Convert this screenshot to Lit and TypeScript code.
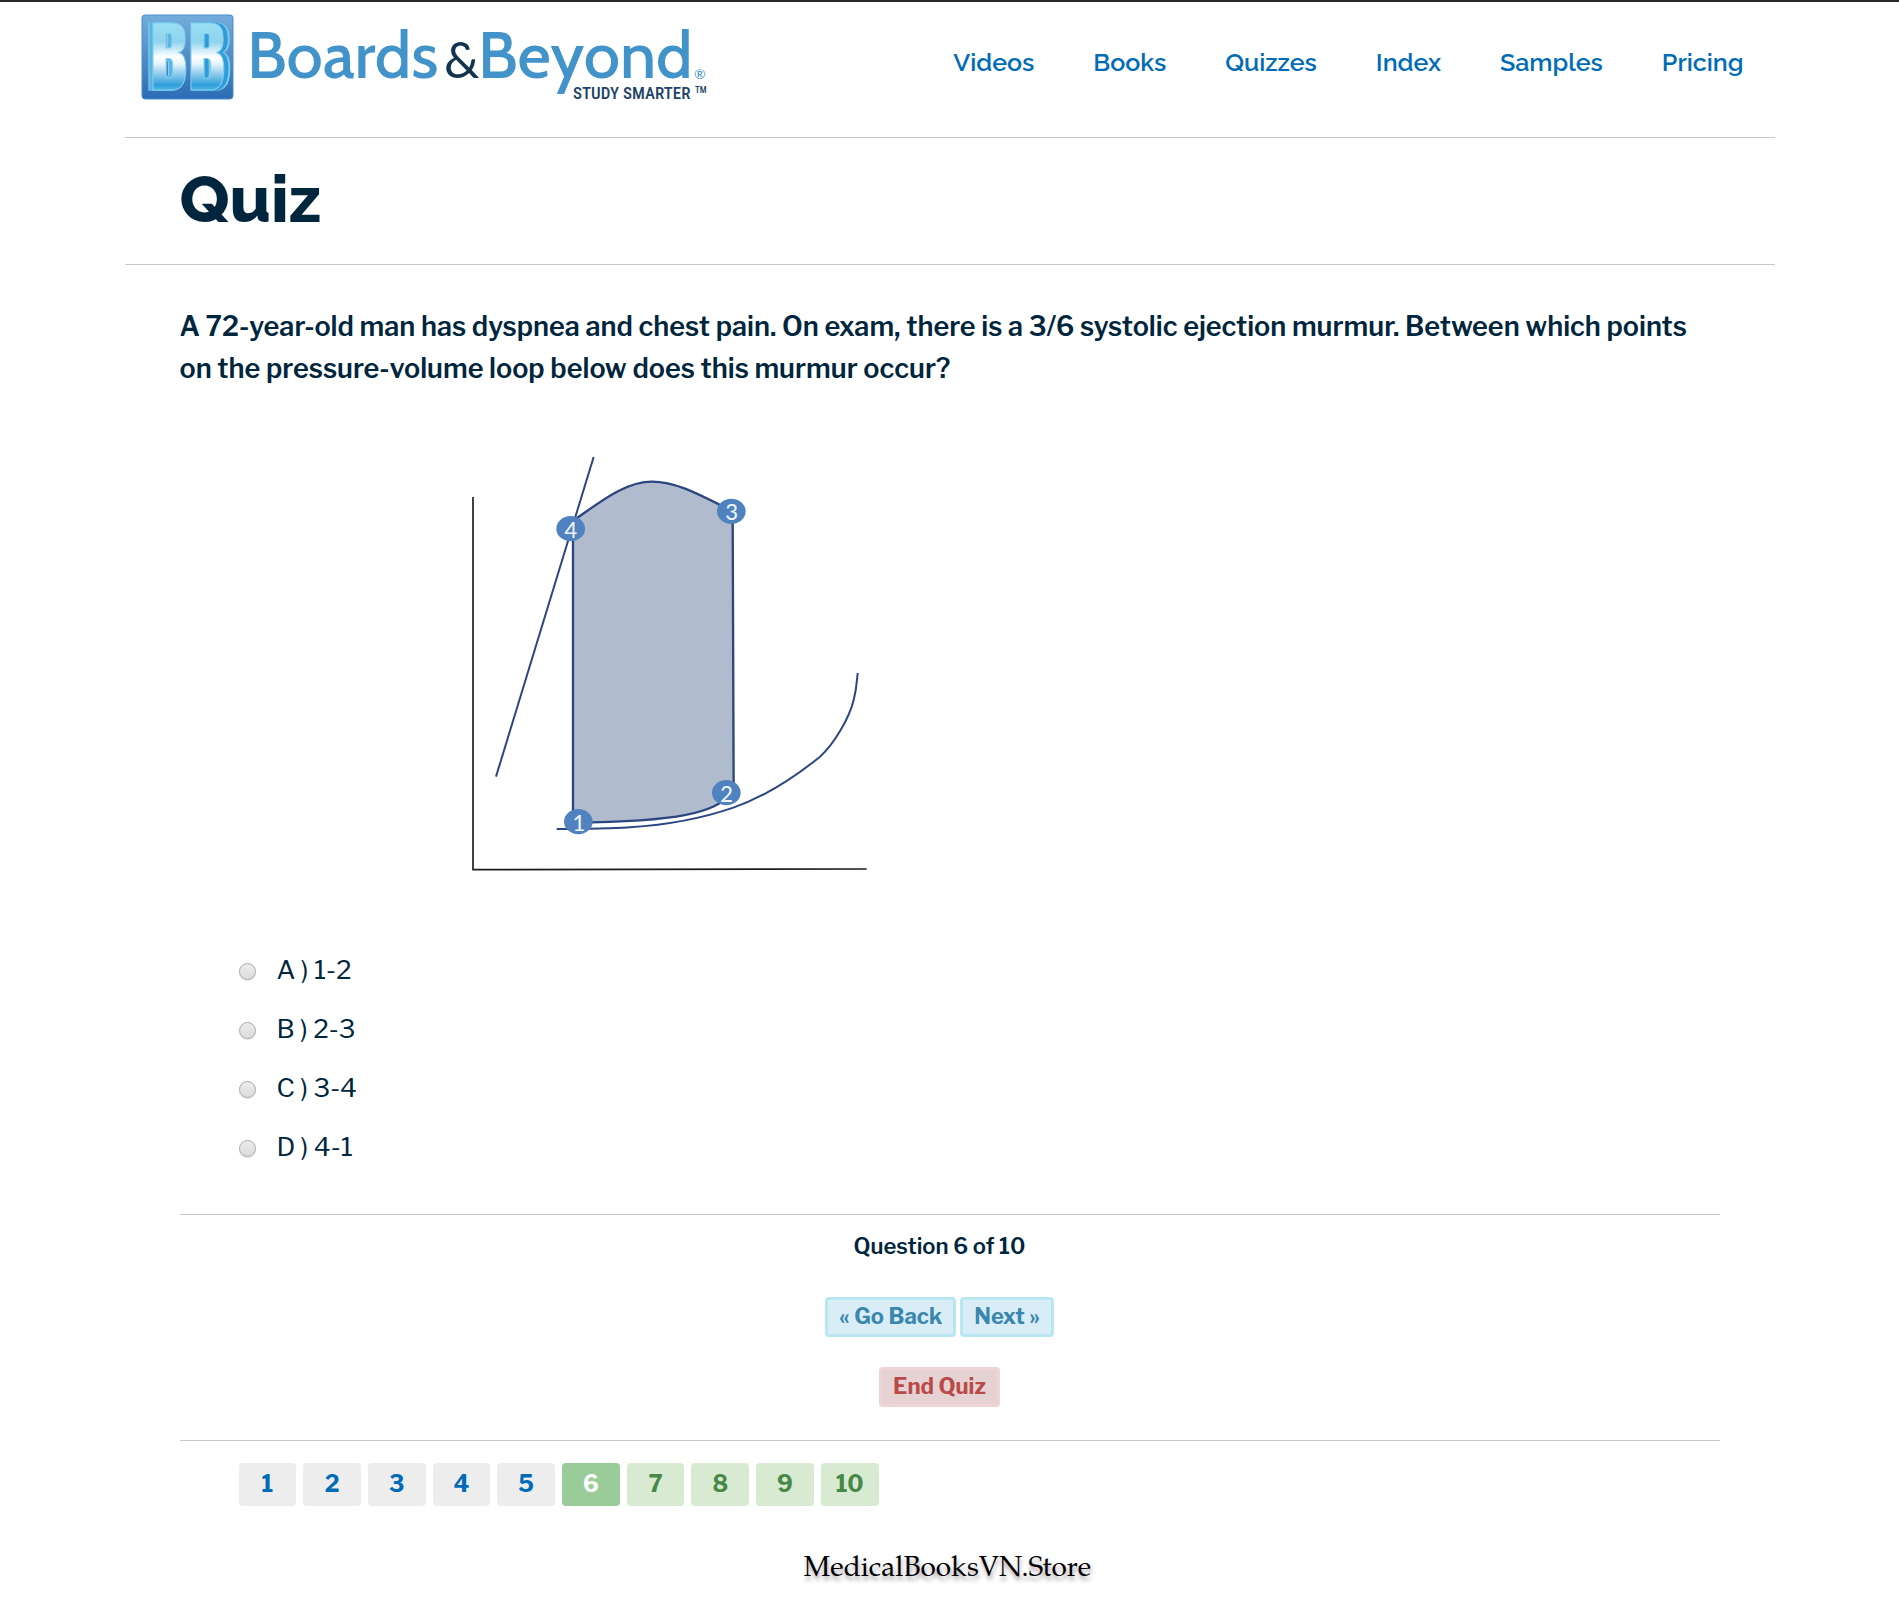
import { LitElement, html, css, svg } from "lit";
import { customElement, state } from "lit/decorators.js";

const NAV = ["Videos", "Books", "Quizzes", "Index", "Samples", "Pricing"];
const CHOICES = [
  { key: "A", text: "1-2" },
  { key: "B", text: "2-3" },
  { key: "C", text: "3-4" },
  { key: "D", text: "4-1" },
];
const TOTAL = 10;
const CURRENT = 6;

@customElement("site-logo")
export class SiteLogo extends LitElement {
  static styles = css`
    :host { display: block; }
    .logo { display: block; width: 580px; height: 100px; overflow: visible; }
    .mark { font: 400 78px "Anton", "Oswald", sans-serif; fill: url(#face); stroke: #7fd0ee; stroke-width: 1; }
    .left { filter: drop-shadow(-3px 0 0 #58b4e2) drop-shadow(-1px 0 0 #8ed2f0); }
    .right { filter: drop-shadow(4px 0 0 #2f9bd8) drop-shadow(2px 0 0 #7cc9ec); }
    .name { font: 500 65px "Cabin", "Lato", sans-serif; fill: #4193c9; }
    .amp { font: 400 50px "Lato", sans-serif; fill: #12344f; }
    .tag { font: 500 17px "Roboto Condensed", "Lato", sans-serif; fill: #1d4466; }
    .tm { font: 500 9px "Roboto Condensed", "Lato", sans-serif; fill: #1d4466; }
    .reg { font: 400 14px "Lato", sans-serif; fill: #4193c9; }
  `;

  render() {
    return html`
      <svg class="logo" viewBox="134 5 580 100" role="img" aria-label="Boards &amp; Beyond, Study Smarter">
        <defs>
          <linearGradient id="tile" x1="0" y1="0" x2="0" y2="1">
            <stop offset="0" stop-color="#74addc" />
            <stop offset="1" stop-color="#2b6cb5" />
          </linearGradient>
          <linearGradient id="face" gradientUnits="userSpaceOnUse" x1="0" y1="22" x2="0" y2="92">
            <stop offset="0" stop-color="#9be0f2" />
            <stop offset="0.28" stop-color="#8fd3ee" />
            <stop offset="0.5" stop-color="#ffffff" />
            <stop offset="0.6" stop-color="#e4f3fb" />
            <stop offset="0.9" stop-color="#2f9edb" />
            <stop offset="1" stop-color="#5bc0e8" />
          </linearGradient>
        </defs>
        <rect x="142" y="15" width="91" height="84" rx="3" fill="url(#tile)" stroke="#4a8fce" />
        <text class="mark left" x="150" y="90">B</text>
        <text class="mark right" x="188" y="90">B</text>
        <text class="name" x="247" y="78">Boards</text>
        <text class="amp" x="444" y="78">&amp;</text>
        <text class="name" x="478" y="78">Beyond</text>
        <text class="reg" x="694" y="79">®</text>
        <text class="tag" x="573" y="99">STUDY SMARTER</text>
        <text class="tm" x="695" y="93">TM</text>
      </svg>
    `;
  }
}

@customElement("pressure-volume-loop")
export class PressureVolumeLoop extends LitElement {
  static styles = css`
    :host { display: block; }
    .plot { display: block; width: 440px; height: 450px; }
    .axis { fill: none; stroke: #1c1c1c; stroke-width: 5; }
    .curve { fill: none; stroke: #2b4680; stroke-width: 6; }
    .loop { fill: #b1bbce; stroke: #2b4680; stroke-width: 7; }
    .dot { fill: #4f82bf; }
    .num { font: 400 76px "Carlito", "Noto Sans", sans-serif; fill: #eef4fb; text-anchor: middle; }
  `;

  private point(n: number, x: number, y: number) {
    return svg`<ellipse class="dot" cx=${x} cy=${y} rx="43" ry="38" />
      <text class="num" x=${x} y=${y + 27}>${n}</text>`;
  }

  render() {
    return html`
      <svg class="plot" viewBox="0 0 1320 1350" role="img" aria-label="Pressure-volume loop">
        <path class="axis" d="M69 171V1289L1250 1287" />
        <path class="loop" d="M369 242C440 195 520 125 606 125C680 125 750 165 848 214L851 1062C780 1118 700 1145 369 1148Z" />
        <path class="curve" d="M431 51L138 1010" />
        <path class="curve" d="M320 1167C420 1167 480 1166 540 1162C650 1155 760 1134 850 1103C950 1068 1030 1015 1110 950C1150 915 1198 835 1211 780C1220 745 1220 730 1223 699" />
        ${this.point(4, 362, 266)}
        ${this.point(3, 844, 214)}
        ${this.point(2, 829, 1058)}
        ${this.point(1, 385, 1145)}
      </svg>
    `;
  }
}

@customElement("app-root")
export class AppRoot extends LitElement {
  static styles = css`
    :host {
      display: block;
      border-top: 2px solid #2a2a2a;
      background: #fff;
      color: #00263e;
      font-family: "Libre Franklin", "Open Sans", sans-serif;
      font-size: 26px;
      line-height: 42px;
    }
    * { box-sizing: border-box; }
    .page { max-width: 1650px; margin: 0 auto; }
    .top {
      display: flex;
      justify-content: space-between;
      align-items: flex-start;
      height: 136px;
      padding: 3px 31px 0 9px;
      border-bottom: 1px solid #c8c8c8;
    }
    .nav { display: flex; gap: 59px; padding-top: 36px; }
    .nav a, .home { text-decoration: none; }
    .nav a { color: #006cb7; font: 600 25px/42px "Raleway", "Lato", sans-serif; }
    .title { padding: 28px 55px 32px; border-bottom: 1px solid #c8c8c8; }
    h1 { margin: 0; font: 800 66px/66px "Raleway", "Lato", sans-serif; }
    main { padding: 41px 55px 0; }
    .ask { margin: 0; font-size: 27px; font-weight: 600; line-height: 42px; }
    .figure { padding: 50px 0 0 270px; }
    fieldset { margin: 0; padding: 50px 0 0 59px; border: 0; }
    .choice { display: flex; align-items: center; gap: 21px; height: 59px; font-weight: 400; }
    .choice input {
      appearance: none;
      width: 17px;
      height: 17px;
      margin: 3px 0 0;
      border: 1px solid #a9a9a9;
      border-radius: 50%;
      background: linear-gradient(#ececec, #dcdcdc);
      box-shadow: 0 1px 1px #ddd;
    }
    .choice input:checked { background: radial-gradient(#444 0 4px, #e2e2e2 5px); }
    .actions {
      display: flex;
      flex-direction: column;
      align-items: center;
      margin-top: 38px;
      padding: 10px 20px 33px 0;
      border-top: 1px solid #c8c8c8;
      border-bottom: 1px solid #c8c8c8;
    }
    .count { margin: 0 0 30px; font-size: 22px; font-weight: 600; }
    .pair { display: flex; gap: 4px; margin-bottom: 30px; }
    .btn {
      height: 40px;
      padding: 0 11px 2px;
      border: 3px solid #b9e7f1;
      border-radius: 4px;
      background: #d9edf7;
      color: #3a87ad;
      font: 700 22px/32px "Libre Franklin", "Open Sans", sans-serif;
    }
    .end { border-color: #eed3d7; background: #e6d1d3; color: #b94a48; }
    .pager {
      display: grid;
      grid-template-columns: repeat(10, 1fr);
      gap: 7px;
      width: 640px;
      max-width: 100%;
      margin: 22px 0 0 59px;
    }
    .pager a {
      height: 43px;
      border-radius: 4px;
      background: #ededed;
      color: #006cb7;
      font-size: 23px;
      font-weight: 700;
      line-height: 43px;
      text-align: center;
      text-decoration: none;
    }
    .pager .ahead { background: #d9ead3; color: #468847; }
    .pager .now { background: #99cc99; color: #fff; }
    footer {
      padding: 42px 4px 20px 0;
      color: #000;
      font: 400 28px/44px "Palatino Linotype", "TeX Gyre Pagella", "Liberation Serif", serif;
      text-align: center;
      text-shadow: 1px 4px 4px rgba(60, 40, 60, 0.45);
    }
  `;

  @state() private answer = "";

  private pageClass(n: number) {
    return n === CURRENT ? "now" : n > CURRENT ? "ahead" : "seen";
  }

  render() {
    return html`
      <div class="page">
        <header class="top">
          <a class="home" href="#home" aria-label="Boards &amp; Beyond"><site-logo></site-logo></a>
          <nav class="nav">
            ${NAV.map((item) => html`<a href="#${item.toLowerCase()}">${item}</a>`)}
          </nav>
        </header>
        <div class="title"><h1>Quiz</h1></div>
        <main>
          <p class="ask">
            A 72-year-old man has dyspnea and chest pain. On exam, there is a 3/6 systolic ejection
            murmur. Between which points on the pressure-volume loop below does this murmur occur?
          </p>
          <div class="figure"><pressure-volume-loop></pressure-volume-loop></div>
          <fieldset aria-label="Answer choices">
            ${CHOICES.map(
              (c) => html`
                <div class="choice">
                  <input
                    type="radio"
                    name="answer"
                    id="choice-${c.key}"
                    .checked=${this.answer === c.key}
                    @change=${() => (this.answer = c.key)}
                  />
                  <label for="choice-${c.key}">${c.key} ) ${c.text}</label>
                </div>
              `
            )}
          </fieldset>
          <section class="actions">
            <p class="count">Question ${CURRENT} of ${TOTAL}</p>
            <div class="pair">
              <button class="btn" type="button">« Go Back</button>
              <button class="btn" type="button">Next »</button>
            </div>
            <button class="btn end" type="button">End Quiz</button>
          </section>
          <nav class="pager" aria-label="Questions">
            ${Array.from({ length: TOTAL }, (_, i) => i + 1).map(
              (n) => html`<a class=${this.pageClass(n)} href="#question-${n}">${n}</a>`
            )}
          </nav>
        </main>
        <footer>MedicalBooksVN.Store</footer>
      </div>
    `;
  }
}
